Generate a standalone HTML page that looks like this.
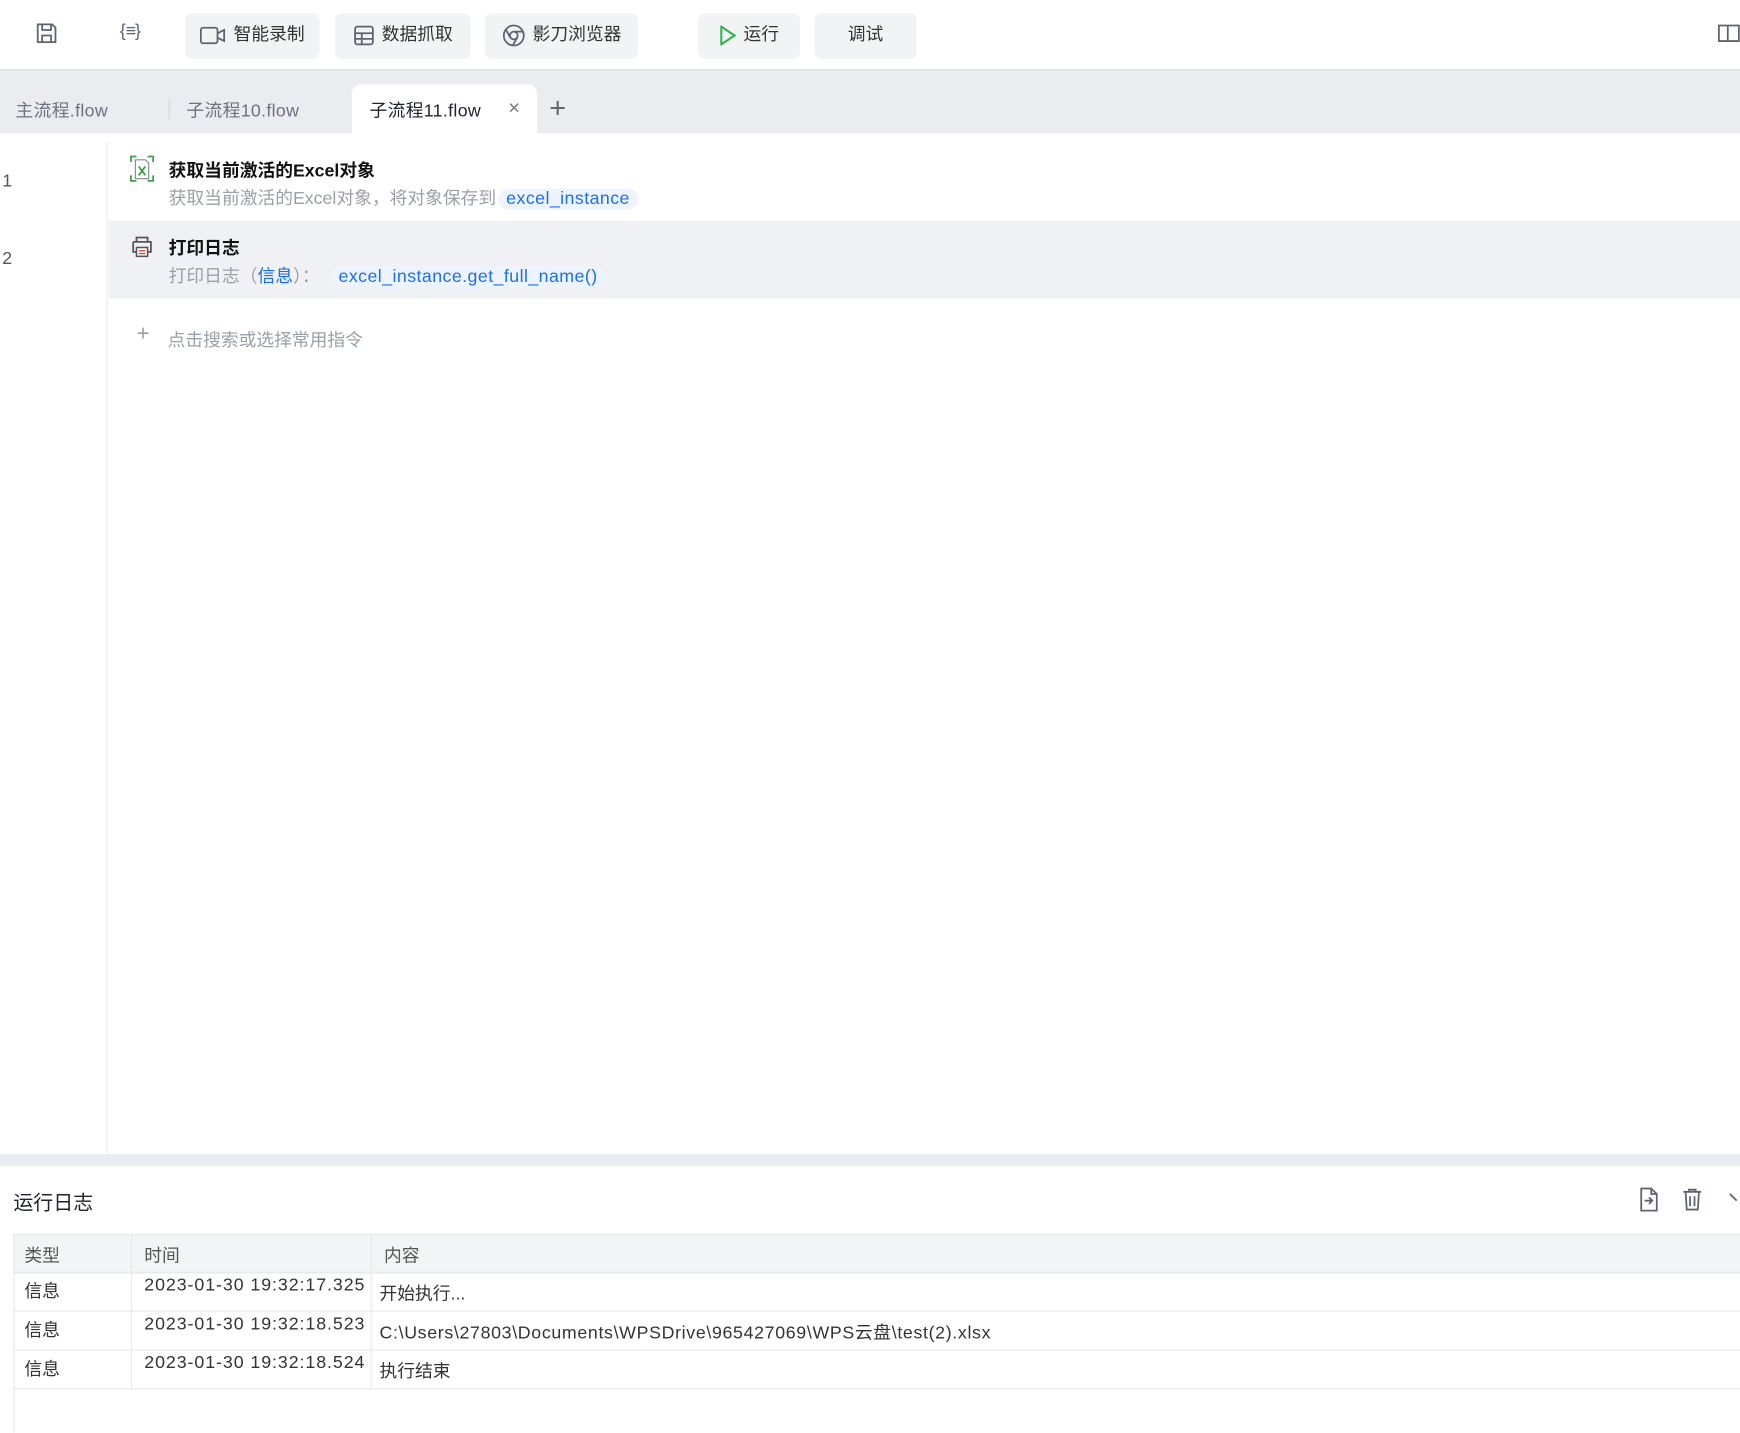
<!DOCTYPE html>
<html><head><meta charset="utf-8"><style>
html,body{margin:0;padding:0;width:1740px;height:1433px;overflow:hidden;background:#fff}
#w{position:absolute;left:0;top:0;width:1568px;height:1291px;transform:scale(1.10969);transform-origin:0 0;font-family:"Liberation Sans","Noto Sans CJK SC",sans-serif;color:#1f2329}
.a{position:absolute;white-space:nowrap}
.btn{position:absolute;top:12px;height:41px;background:#f2f3f5;border-radius:6px;font-size:16px;color:#333;display:flex;align-items:center;justify-content:center;gap:6px;line-height:16px;padding-bottom:1px;box-sizing:border-box}
.ic{stroke:#5d6370;fill:none;stroke-width:1.6}
.chip{background:#eef4ff;color:#1a6ff0;border-radius:11px;padding:1px 7px;letter-spacing:0.4px}
.cell{position:absolute;font-size:16px;color:#333}
.ts{letter-spacing:0.85px}
</style></head><body><div id="w">
<!-- toolbar -->
<div class="a" style="left:0;top:62px;width:1568px;height:2px;background:#e4e6ea"></div>
<svg class="a" style="left:31px;top:19px" width="22" height="22" viewBox="0 0 22 22"><path class="ic" d="M3 3h13l3 3v13H3z M7 3v5h8V3 M7 19v-6h8v6"/></svg>
<div class="a" style="left:108px;top:20px;font-size:16px;color:#5d6370">{<span style="letter-spacing:-1px">≡</span>}</div>
<div class="btn" style="left:167px;width:121px"><svg width="24" height="18" viewBox="0 0 24 18"><rect class="ic" x="1" y="2" width="15" height="14" rx="2"/><path class="ic" d="M16 7l6-3v10l-6-3"/></svg>智能录制</div>
<div class="btn" style="left:302px;width:122px"><svg width="20" height="20" viewBox="0 0 20 20"><rect class="ic" x="2" y="2" width="16" height="16" rx="2"/><path class="ic" d="M2 8h16M2 13h16M8 8v10"/></svg>数据抓取</div>
<div class="btn" style="left:437px;width:138px"><svg width="22" height="22" viewBox="0 0 22 22"><circle class="ic" cx="11" cy="11" r="9"/><circle class="ic" cx="11" cy="11" r="3.5"/><path class="ic" d="M11 7.5h8M8 13l-4-7M14 13l-4 7"/></svg>影刀浏览器</div>
<div class="btn" style="left:629px;width:92px"><svg width="16" height="18" viewBox="0 0 16 18"><path d="M2 1l12 8-12 8z" fill="none" stroke="#2fb24c" stroke-width="1.8"/></svg>运行</div>
<div class="btn" style="left:734px;width:92px">调试</div>
<svg class="a" style="left:1548px;top:20px" width="20" height="20" viewBox="0 0 20 20"><path class="ic" d="M1 3h8v14H1z M9 3h10v14H9"/></svg>
<!-- tabs -->
<div class="a" style="left:0;top:64px;width:1568px;height:56px;background:#ebecf0"></div>
<div class="a" style="left:14px;top:86px;font-size:16px;color:#6b7280;letter-spacing:0.3px">主流程.flow</div>
<div class="a" style="left:152px;top:89px;width:1px;height:18px;background:#cfd2d8"></div>
<div class="a" style="left:168px;top:86px;font-size:16px;color:#6b7280;letter-spacing:0.3px">子流程10.flow</div>
<div class="a" style="left:317px;top:76px;width:167px;height:44px;background:#fff;border-radius:8px 8px 0 0"></div>
<div class="a" style="left:333px;top:86px;font-size:16px;color:#1f2329;letter-spacing:0.3px">子流程11.flow</div>
<div class="a" style="left:458px;top:87px;font-size:18px;color:#777">×</div>
<div class="a" style="left:495px;top:82px;font-size:26px;color:#666;font-weight:300">+</div>
<!-- editor -->
<div class="a" style="left:96px;top:128px;width:1px;height:912px;background:#e6e8eb"></div>
<div class="a" style="left:2px;top:155px;font-size:16px;color:#555">1</div>
<div class="a" style="left:2px;top:225px;font-size:16px;color:#555">2</div>
<svg class="a" style="left:117px;top:140px" width="22" height="24" viewBox="0 0 22 24"><path d="M1 6V1h5M16 1h5v5M21 18v5h-5M6 23H1v-5" stroke="#3aa24a" stroke-width="1.6" fill="none"/><path d="M5 4h9l3 3v14H5z" stroke="#888" fill="none"/><path d="M8 10l6 8M14 10l-6 8" stroke="#3aa24a" stroke-width="1.6"/></svg>
<div class="a" style="left:152px;top:140px;font-size:16px;font-weight:bold;color:#111">获取当前激活的Excel对象</div>
<div class="a" style="left:152px;top:165px;font-size:16px;color:#9aa0a8">获取当前激活的Excel对象，将对象保存到<span class="chip" style="margin-left:2px">excel_instance</span></div>
<div class="a" style="left:98px;top:199px;width:1470px;height:70px;background:#f0f1f5"></div>
<svg class="a" style="left:117px;top:212px" width="22" height="20" viewBox="0 0 22 20"><path d="M6 6V2h10v4M3 6h16v9h-3M6 15H3V6" stroke="#555" stroke-width="1.6" fill="none"/><rect x="6" y="11" width="10" height="8" stroke="#555" stroke-width="1.4" fill="#fff"/><path d="M8 14h6M8 16.5h6" stroke="#e04848" stroke-width="1.3"/></svg>
<div class="a" style="left:152px;top:210px;font-size:16px;font-weight:bold;color:#111">打印日志</div>
<div class="a" style="left:152px;top:235px;font-size:16px;color:#9aa0a8">打印日志（<span style="color:#1a6ff0">信息</span>）：<span class="chip" style="margin-left:10px">excel_instance.get_full_name()</span></div>
<div class="a" style="left:123px;top:290px;font-size:20px;color:#9aa0a8;font-weight:300">+</div>
<div class="a" style="left:151px;top:293px;font-size:16px;color:#9aa0a8">点击搜索或选择常用指令</div>
<!-- splitter -->
<div class="a" style="left:0;top:1040px;width:1568px;height:11px;background:#ebecf0"></div>
<div class="a" style="left:12px;top:1070px;font-size:18px;color:#1f2329">运行日志</div>
<svg class="a" style="left:1476px;top:1070px" width="20" height="22" viewBox="0 0 20 22"><path class="ic" d="M3 1h9l5 5v15H3z M12 1v5h5 M6 12h7M10 9l3 3-3 3"/></svg>
<svg class="a" style="left:1515px;top:1070px" width="20" height="22" viewBox="0 0 20 22"><path class="ic" d="M2 4h16M7 4V2h6v2M4 4l1 16h10l1-16M8 8v9M12 8v9"/></svg>
<svg class="a" style="left:1558px;top:1074px" width="12" height="12" viewBox="0 0 12 12"><path class="ic" d="M1 2l6 6"/></svg>
<!-- table -->
<div class="a" style="left:12px;top:1112px;width:1556px;height:35px;background:#f3f4f6;border-top:1px solid #e6e8eb"></div>
<div class="a" style="left:12px;top:1112px;width:1px;height:179px;background:#e6e8eb"></div>
<div class="a" style="left:118px;top:1112px;width:1px;height:139px;background:#e6e8eb"></div>
<div class="a" style="left:334px;top:1112px;width:1px;height:139px;background:#e6e8eb"></div>
<div class="a" style="left:12px;top:1146px;width:1556px;height:1px;background:#e6e8eb"></div>
<div class="a" style="left:12px;top:1181px;width:1556px;height:1px;background:#e6e8eb"></div>
<div class="a" style="left:12px;top:1216px;width:1556px;height:1px;background:#e6e8eb"></div>
<div class="a" style="left:12px;top:1251px;width:1556px;height:1px;background:#e6e8eb"></div>
<div class="cell" style="left:22px;top:1118px;color:#555">类型</div>
<div class="cell" style="left:130px;top:1118px;color:#555">时间</div>
<div class="cell" style="left:346px;top:1118px;color:#555">内容</div>
<div class="cell" style="left:22px;top:1150px">信息</div>
<div class="cell ts" style="left:130px;top:1150px">2023-01-30 19:32:17.325</div>
<div class="cell" style="left:342px;top:1152px">开始执行...</div>
<div class="cell" style="left:22px;top:1185px">信息</div>
<div class="cell ts" style="left:130px;top:1185px">2023-01-30 19:32:18.523</div>
<div class="cell" style="left:342px;top:1187px;letter-spacing:0.6px">C:\Users\27803\Documents\WPSDrive\965427069\WPS云盘\test(2).xlsx</div>
<div class="cell" style="left:22px;top:1220px">信息</div>
<div class="cell ts" style="left:130px;top:1220px">2023-01-30 19:32:18.524</div>
<div class="cell" style="left:342px;top:1222px">执行结束</div>
</div></body></html>
